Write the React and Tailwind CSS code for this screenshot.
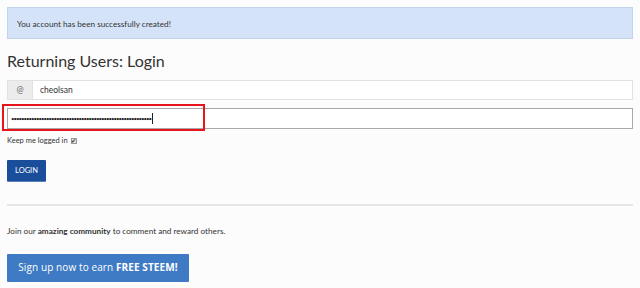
export default function App() {
  return (
    <div className="w-[640px] h-[288px] bg-[#fcfcfc] overflow-hidden" style={{ fontFamily: "Lato, 'Liberation Sans', sans-serif" }}>
      <div className="px-[7px] pt-[7px]">
        <div className="h-[32px] bg-[#d4e3f8] border border-[#c3d4ea] flex items-center pl-[9px] pt-[2px] text-[8.2px] text-[#333]">
          You account has been successfully created!
        </div>
        <h2 className="mt-[10px] text-[16px] leading-[24px] text-[#333] font-['Lato',sans-serif] whitespace-nowrap">
          Returning Users: Login
        </h2>
        <div className="mt-[7px] flex h-[20px] border border-[#e2e2e2] bg-white">
          <div className="w-[25px] bg-[#ececec] border-r border-[#e2e2e2] flex items-center justify-center text-[8.5px] text-[#666]">@</div>
          <div className="flex items-center pl-[7px] text-[8.5px] text-[#333]">cheolsan</div>
        </div>
        <div className="relative mt-[8px]">
          <div className="h-[21px] border border-[#a8a8a8] bg-white flex items-center pl-[3px]">
            <span className="text-[6px] tracking-[-0.98px] text-[#222] leading-none">{"•".repeat(56)}</span>
            <span className="ml-[1px] w-px h-[11px] bg-[#222]"></span>
          </div>
          <div className="absolute left-[-5px] top-[-4px] w-[203px] h-[27px] border-2 border-[#e8141c]"></div>
        </div>
        <div className="mt-[6px] flex items-center text-[7.5px] text-[#333]">
          <span>Keep me logged in</span>
          <span className="ml-[3px] w-[6px] h-[6px] bg-[#ddd] border border-[#999] flex items-center justify-center text-[6px] leading-none">✔</span>
        </div>
        <button className="mt-[14px] w-[39px] h-[21px] bg-[#1a4e9b] rounded-[1px] text-white text-[7.5px] flex items-center justify-center shadow-[0_1px_0_#5b7fbf]">
          LOGIN
        </button>
        <div className="mt-[23px] h-[2px] bg-[#e6e6e6]"></div>
        <div className="mt-[19px] text-[8.2px] text-[#333]">
          Join our <b>amazing community</b> to comment and reward others.
        </div>
        <button className="mt-[16px] w-[182px] h-[28px] bg-[#3e7bc4] rounded-[1px] text-white text-[10px] flex items-center justify-center font-['Open_Sans',sans-serif] tracking-[0.1px] whitespace-nowrap">
          Sign up now to earn&nbsp;<b className="font-bold">FREE STEEM!</b>
        </button>
      </div>
    </div>
  );
}
